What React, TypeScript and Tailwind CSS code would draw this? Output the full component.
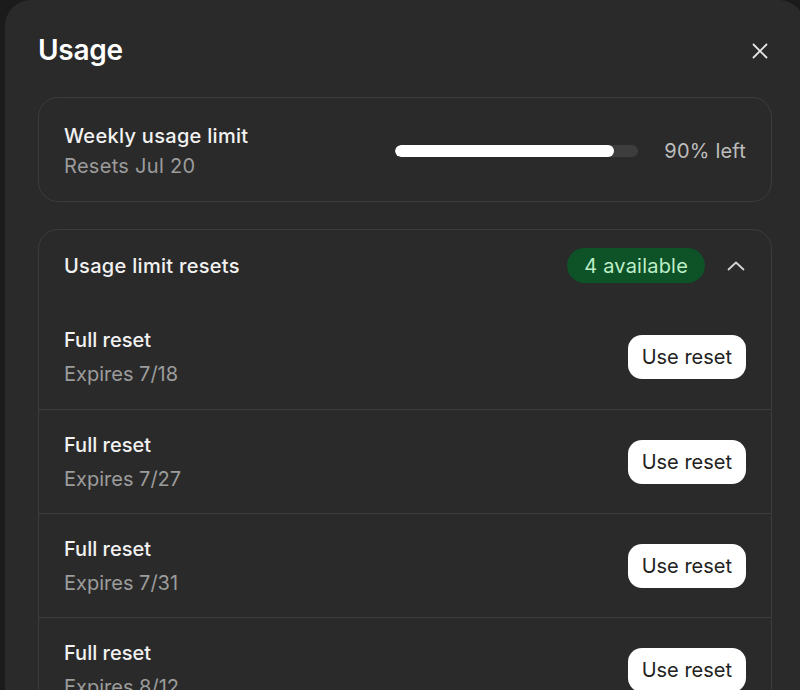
import React from "react";

const rows = ["7/18", "7/27", "7/31", "8/12"];

function XIcon() {
  return (
    <svg width="16" height="16" viewBox="0 0 16 16" fill="none" stroke="#e5e5e5" strokeWidth="1.8" strokeLinecap="round">
      <path d="M1.5 1.5 14.5 14.5M14.5 1.5 1.5 14.5" />
    </svg>
  );
}

function ChevronUp() {
  return (
    <svg width="18" height="10" viewBox="0 0 18 10" fill="none" stroke="#d4d4d4" strokeWidth="1.8" strokeLinecap="round" strokeLinejoin="round">
      <path d="M1.5 8.5 9 1.5l7.5 7" />
    </svg>
  );
}

export default function App() {
  return (
    <div
      className="w-[800px] h-[690px] overflow-hidden bg-[#1b1b1b] pl-[5px]"
      style={{ fontFamily: "Inter, 'Noto Sans', sans-serif" }}
    >
      <div className="w-[800px] h-[720px] bg-[#2a2a2a] rounded-t-[26px] px-[33px] pt-[31px]">
        <div className="flex items-center justify-between h-[38px]">
          <h1 className="text-[28px] leading-[38px] font-semibold text-white tracking-[-0.3px]">Usage</h1>
          <div className="mr-[4px] mt-[2px]">
            <XIcon />
          </div>
        </div>

        <div className="mt-[28px] h-[105px] rounded-[20px] border border-[#3c3c3c] px-[25px] pt-[3px] flex items-center justify-between">
          <div className="flex flex-col gap-[4px]">
            <div className="text-[20px] leading-[26px] font-medium text-[#f2f2f2] tracking-[0.3px]">Weekly usage limit</div>
            <div className="text-[20px] leading-[26px] text-[#9c9c9c] tracking-[0.3px]">Resets Jul 20</div>
          </div>
          <div className="flex items-center gap-[26px]">
            <div className="w-[243px] h-[12px] rounded-full bg-[#3d3d3d] overflow-hidden">
              <div className="h-full rounded-full bg-white" style={{ width: "90%" }} />
            </div>
            <div className="text-[20px] leading-[26px] text-[#bdbdbd] tracking-[0.2px]">90% left</div>
          </div>
        </div>

        <div className="mt-[27px] rounded-[20px] border border-[#3c3c3c]">
          <div className="h-[75px] px-[25px] pb-[4px] flex items-center justify-between">
            <div className="text-[20px] leading-[26px] font-medium text-[#f2f2f2] tracking-[0.3px]">Usage limit resets</div>
            <div className="flex items-center gap-[22px]">
              <div className="h-[35px] px-[17px] rounded-full bg-[#0e5227] flex items-center text-[20px] text-[#bdeec8] tracking-[0.2px]">
                4 available
              </div>
              <div className="mr-[1px]">
                <ChevronUp />
              </div>
            </div>
          </div>
          {rows.map((d, i) => (
            <div
              key={d}
              className={
                "h-[104px] px-[25px] flex items-center justify-between " +
                (i > 0 ? "border-t border-[#3c3c3c]" : "")
              }
            >
              <div className="flex flex-col gap-[8px]">
                <div className="text-[20px] leading-[26px] font-medium text-[#f2f2f2]">Full reset</div>
                <div className="text-[20px] leading-[26px] text-[#9c9c9c]">Expires {d}</div>
              </div>
              <button className="h-[44px] px-[14px] rounded-[14px] bg-white text-[20px] text-[#222222]">
                Use reset
              </button>
            </div>
          ))}
        </div>
      </div>
    </div>
  );
}
